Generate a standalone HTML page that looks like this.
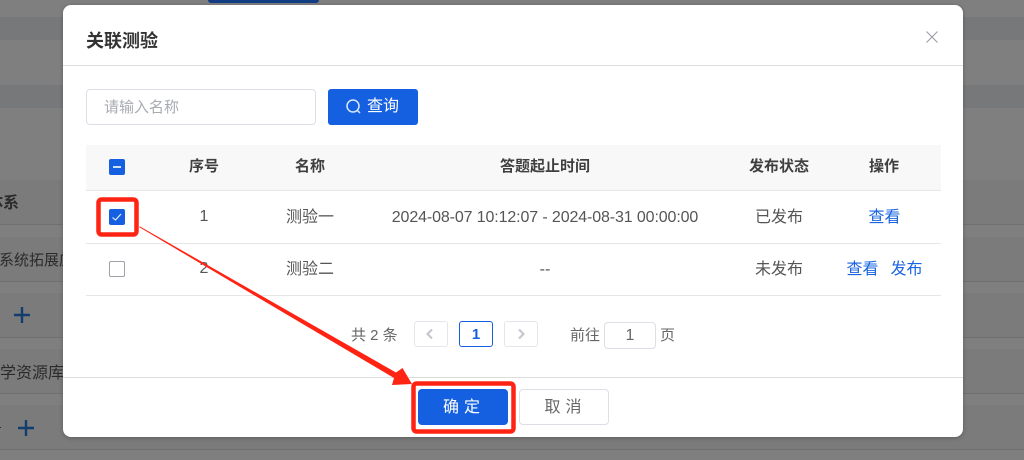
<!DOCTYPE html>
<html lang="zh">
<head>
<meta charset="utf-8">
<style>
html,body{margin:0;padding:0}
body{width:1024px;height:460px;overflow:hidden;position:relative;background:#7f7f7f;font-family:"Liberation Sans","Noto Sans CJK SC",sans-serif;color:#4a4a4a;font-size:14px}
.a{position:absolute;white-space:nowrap}
.c{position:absolute;text-align:center;white-space:nowrap;transform:translateX(-50%)}
.band{position:absolute;left:0;width:1024px}
.th{font-weight:bold;color:#3f3f3f;font-size:15px;top:157px;line-height:20px}
.td{font-size:16px;color:#555;line-height:20px}
.link{color:#1b64e0}
.hl{position:absolute;left:86px;width:855px;height:1px;background:#e6e6e6}
.bgt{position:absolute;color:#2b2b2b;font-size:16px;white-space:nowrap;line-height:20px}
</style>
</head>
<body>
<div class="band" style="top:17px;height:23px;background:#77787a"></div>
<div class="band" style="top:85px;height:23px;background:#77787a"></div>
<div class="band" style="top:180px;height:44px;background:#7a7b7a"></div>
<div class="band" style="top:237px;height:44px;background:#7a7b7a"></div>
<div class="band" style="top:293px;height:44px;background:#7a7b7a"></div>
<div class="band" style="top:349px;height:44px;background:#7a7b7a"></div>
<div class="band" style="top:405px;height:44px;background:#7a7b7a"></div>
<div class="band" style="top:224px;height:1px;background:#6f706f"></div>
<div class="band" style="top:281px;height:1px;background:#6f706f"></div>
<div class="band" style="top:337px;height:1px;background:#6f706f"></div>
<div class="band" style="top:393px;height:1px;background:#6f706f"></div>
<div class="band" style="top:449px;height:1px;background:#6f706f"></div>
<div class="a" style="left:208px;top:0;width:111px;height:3px;background:#123d85;border-radius:0 0 4px 4px"></div>
<div class="bgt" style="left:-13px;top:194px;font-weight:bold">体系</div>
<div class="bgt" style="left:-1px;top:251px;font-size:15px">系统拓展应用</div>
<div class="bgt" style="left:-16px;top:364px">教学资源库</div>
<svg class="a" style="left:13px;top:306px" width="18" height="18"><path d="M1 9H17M9 1V17" stroke="#123d6e" stroke-width="2.4" fill="none"/></svg>
<svg class="a" style="left:17px;top:419px" width="18" height="18"><path d="M1 9H17M9 1V17" stroke="#123d6e" stroke-width="2.4" fill="none"/></svg>
<div class="a" style="left:0;top:427px;width:1px;height:1px;background:#2b2b2b"></div>

<div class="a" style="left:63px;top:5px;width:900px;height:432px;background:#fff;border-radius:8px;box-shadow:0 1px 4px rgba(0,0,0,.25)"></div>
<div class="a" style="left:86px;top:29px;font-size:18px;line-height:24px;font-weight:bold;color:#333">关联测验</div>
<svg class="a" style="left:925px;top:30px" width="14" height="14"><path d="M1.5 1.5L12.5 12.5M12.5 1.5L1.5 12.5" stroke="#9a9ca3" stroke-width="1.1" fill="none"/></svg>
<div class="a" style="left:63px;top:65px;width:900px;height:1px;background:#dcdcdc"></div>

<div class="a" style="left:86px;top:89px;width:228px;height:34px;border:1px solid #dcdfe6;border-radius:4px"></div>
<div class="a" style="left:104px;top:98px;font-size:15px;line-height:20px;color:#a8abb2">请输入名称</div>
<div class="a" style="left:328px;top:89px;width:90px;height:36px;background:#1560e0;border-radius:3px"></div>
<svg class="a" style="left:345px;top:98px" width="17" height="17"><circle cx="8" cy="8" r="6" stroke="#dbe7fb" stroke-width="1.5" fill="none"/><path d="M12.500 12.500L15 15" stroke="#dbe7fb" stroke-width="1.5"/></svg>
<div class="a" style="left:367px;top:97px;font-size:16px;line-height:20px;color:#fff">查询</div>

<div class="a" style="left:86px;top:145px;width:855px;height:45px;background:#f8f8f8"></div>
<div class="hl" style="top:190px"></div>
<div class="hl" style="top:243px"></div>
<div class="hl" style="top:295px"></div>

<div class="a" style="left:109px;top:159px;width:16px;height:16px;background:#1560e0;border-radius:2px"></div>
<div class="a" style="left:113px;top:166px;width:8px;height:2px;background:#cfe0fa"></div>
<div class="c th" style="left:204px">序号</div>
<div class="c th" style="left:310px">名称</div>
<div class="c th" style="left:545px">答题起止时间</div>
<div class="c th" style="left:779px">发布状态</div>
<div class="c th" style="left:884px">操作</div>

<div class="a" style="left:109px;top:209px;width:16px;height:16px;background:#1560e0;border-radius:2px"></div>
<svg class="a" style="left:109px;top:209px" width="16" height="16"><path d="M3.500 8.500L6.500 11L12 5" stroke="#eef4fe" stroke-width="1.1" fill="none"/></svg>
<div class="c td" style="left:204px;top:207px">1</div>
<div class="c td" style="left:310px;top:208px">测验一</div>
<div class="c td" style="left:545px;top:208px;letter-spacing:-.12px">2024-08-07 10:12:07 - 2024-08-31 00:00:00</div>
<div class="c td" style="left:779px;top:208px">已发布</div>
<div class="c td link" style="left:884.500px;top:208px">查看</div>

<div class="a" style="left:109px;top:261px;width:14px;height:14px;border:1px solid #a0a0a8;border-radius:2px;background:#fff"></div>
<div class="c td" style="left:204px;top:259px">2</div>
<div class="c td" style="left:310px;top:260px">测验二</div>
<div class="c td" style="left:545px;top:260px">--</div>
<div class="c td" style="left:779px;top:260px">未发布</div>
<div class="c td link" style="left:862.500px;top:260px">查看</div>
<div class="c td link" style="left:906.500px;top:260px">发布</div>

<div class="a" style="left:351px;top:326px;font-size:15px;line-height:20px;color:#666">共 2 条</div>
<div class="a" style="left:414px;top:321px;width:32px;height:24px;border:1px solid #e4e6eb;border-radius:3px"></div>
<svg class="a" style="left:425px;top:328px" width="10" height="12"><path d="M7 1.500L2.500 6L7 10.500" stroke="#c5c8d0" stroke-width="2.200" fill="none"/></svg>
<div class="a" style="left:459px;top:321px;width:32px;height:24px;border:1px solid #1560e0;border-radius:3px;text-align:center;line-height:26px;font-weight:bold;color:#1560e0;font-size:15px">1</div>
<div class="a" style="left:504px;top:321px;width:32px;height:24px;border:1px solid #e4e6eb;border-radius:3px"></div>
<svg class="a" style="left:516px;top:328px" width="10" height="12"><path d="M3 1.500L7.500 6L3 10.500" stroke="#c5c8d0" stroke-width="2.200" fill="none"/></svg>
<div class="a" style="left:570px;top:326px;font-size:15px;line-height:20px;color:#666">前往</div>
<div class="a" style="left:604px;top:322px;width:50px;height:25px;border:1px solid #dcdfe6;border-radius:4px;text-align:center;line-height:25px;color:#666;font-size:16px">1</div>
<div class="a" style="left:660px;top:326px;font-size:15px;line-height:20px;color:#666">页</div>

<div class="a" style="left:63px;top:377px;width:900px;height:1px;background:#dcdcdc"></div>
<div class="a" style="left:418px;top:389px;width:88px;padding-left:2px;height:36px;background:#1560e0;border-radius:4px;text-align:center;line-height:38px;color:#fff;font-size:16px;letter-spacing:5px">确定</div>
<div class="a" style="left:519px;top:389px;width:85px;padding-left:3px;height:34px;border:1px solid #dcdfe6;border-radius:4px;text-align:center;line-height:36px;color:#666;font-size:16px;letter-spacing:5px">取消</div>

<svg class="a" style="left:0;top:0" width="1024" height="460">
<rect x="98.500" y="199.500" width="38" height="35" rx="3" fill="none" stroke="#ff2314" stroke-width="4.500"/>
<rect x="413.500" y="383.500" width="100" height="48" rx="3" fill="none" stroke="#ff2314" stroke-width="4.500"/>
<polygon points="139,227 140,226.500 396,372.500 402.500,368 412,384 392,385 394,378" fill="#ff2314"/>
</svg>
</body>
</html>
